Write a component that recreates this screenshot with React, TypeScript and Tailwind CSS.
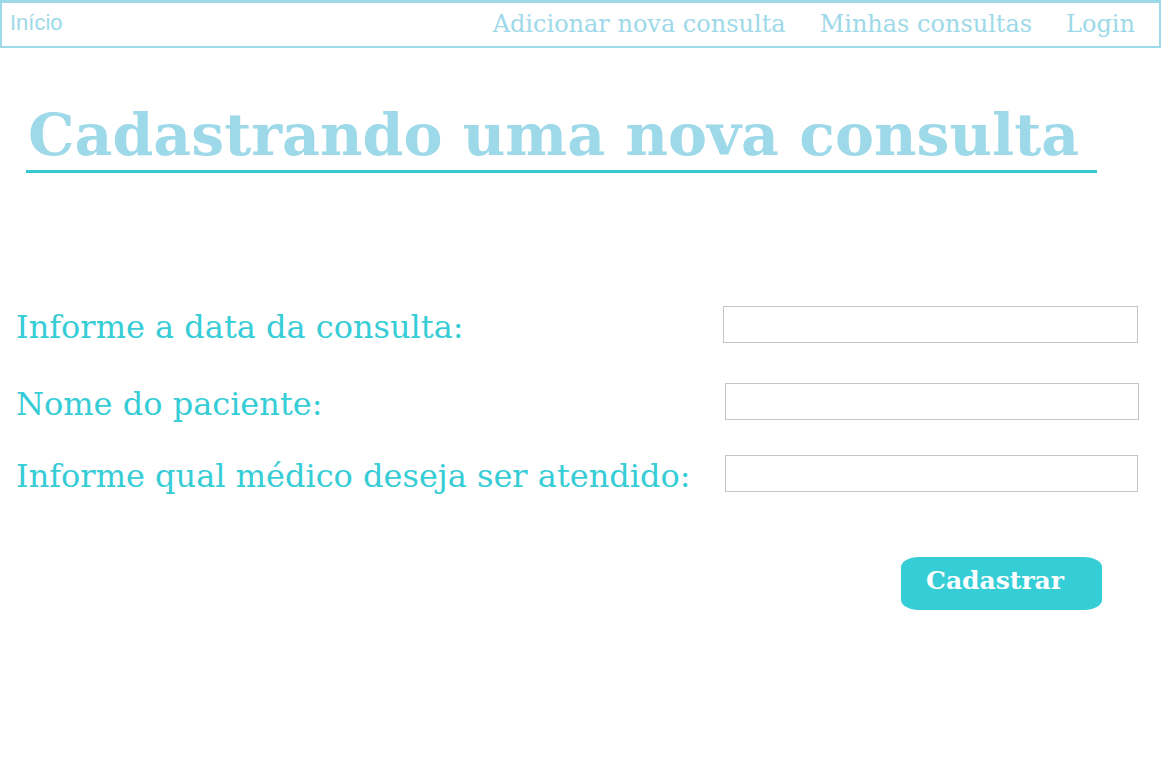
import { useState } from "react";

const serif = "font-['DejaVu_Serif',Georgia,serif]";

export default function App() {
    const [data, setData] = useState("");
    const [paciente, setPaciente] = useState("");
    const [medico, setMedico] = useState("");

    return (
        <div className="w-[1161px] h-[779px] bg-white">
            {/* Navbar */}
            <nav className="h-12 border-2 border-t-[3px] border-[#9dd9e8] flex items-center justify-between pl-2 pr-6">
                <a href="#" className="font-['Liberation_Sans',Arial,sans-serif] text-[22px] text-[#9dd9e8] -mt-1">
                    Início
                </a>
                <ul className={`${serif} flex items-center gap-[34px] text-[24px] text-[#9dd9e8] -mt-[2px]`}>
                    <li><a href="#">Adicionar nova consulta</a></li>
                    <li><a href="#">Minhas consultas</a></li>
                    <li><a href="#">Login</a></li>
                </ul>
            </nav>

            {/* Titulo */}
            <div className="pl-[26px] pt-[52px]">
                <h1 className={`${serif} inline-block w-[1071px] border-b-[3px] border-[#36c9d3] pl-[2px] font-bold text-[58.5px] leading-[70px] text-[#9dd9e8] whitespace-nowrap`}>
                    Cadastrando uma nova consulta
                </h1>
            </div>

            {/* Formulario */}
            <form className={`${serif} mt-[133px] pl-4 pr-[22px] text-[32px] text-[#36cdd6]`}>
                <div className="flex items-center justify-between h-[37px]">
                    <label className="mt-[4px]">Informe a data da consulta:</label>
                    <input
                        value={data}
                        onChange={(e) => setData(e.target.value)}
                        className="w-[415px] h-[37px] border border-[#c4c4c4] mr-[1px]"
                    />
                </div>
                <div className="flex items-center justify-between h-[37px] mt-[40px]">
                    <label className="mt-[4px]">Nome do paciente:</label>
                    <input
                        value={paciente}
                        onChange={(e) => setPaciente(e.target.value)}
                        className="w-[414px] h-[37px] border border-[#c4c4c4]"
                    />
                </div>
                <div className="flex items-center justify-between h-[37px] mt-[35px]">
                    <label className="mt-[4px]">Informe qual médico deseja ser atendido:</label>
                    <input
                        value={medico}
                        onChange={(e) => setMedico(e.target.value)}
                        className="w-[413px] h-[37px] border border-[#c4c4c4] mr-[1px]"
                    />
                </div>

                <div className="flex justify-end mt-[65px] pr-[37px]">
                    <button
                        type="button"
                        className="w-[201px] h-[53px] rounded-[18px/10px] bg-[#36ced6] text-white font-bold text-[25px] text-left pl-[25px] pb-[5px]"
                    >
                        Cadastrar
                    </button>
                </div>
            </form>
        </div>
    );
}
